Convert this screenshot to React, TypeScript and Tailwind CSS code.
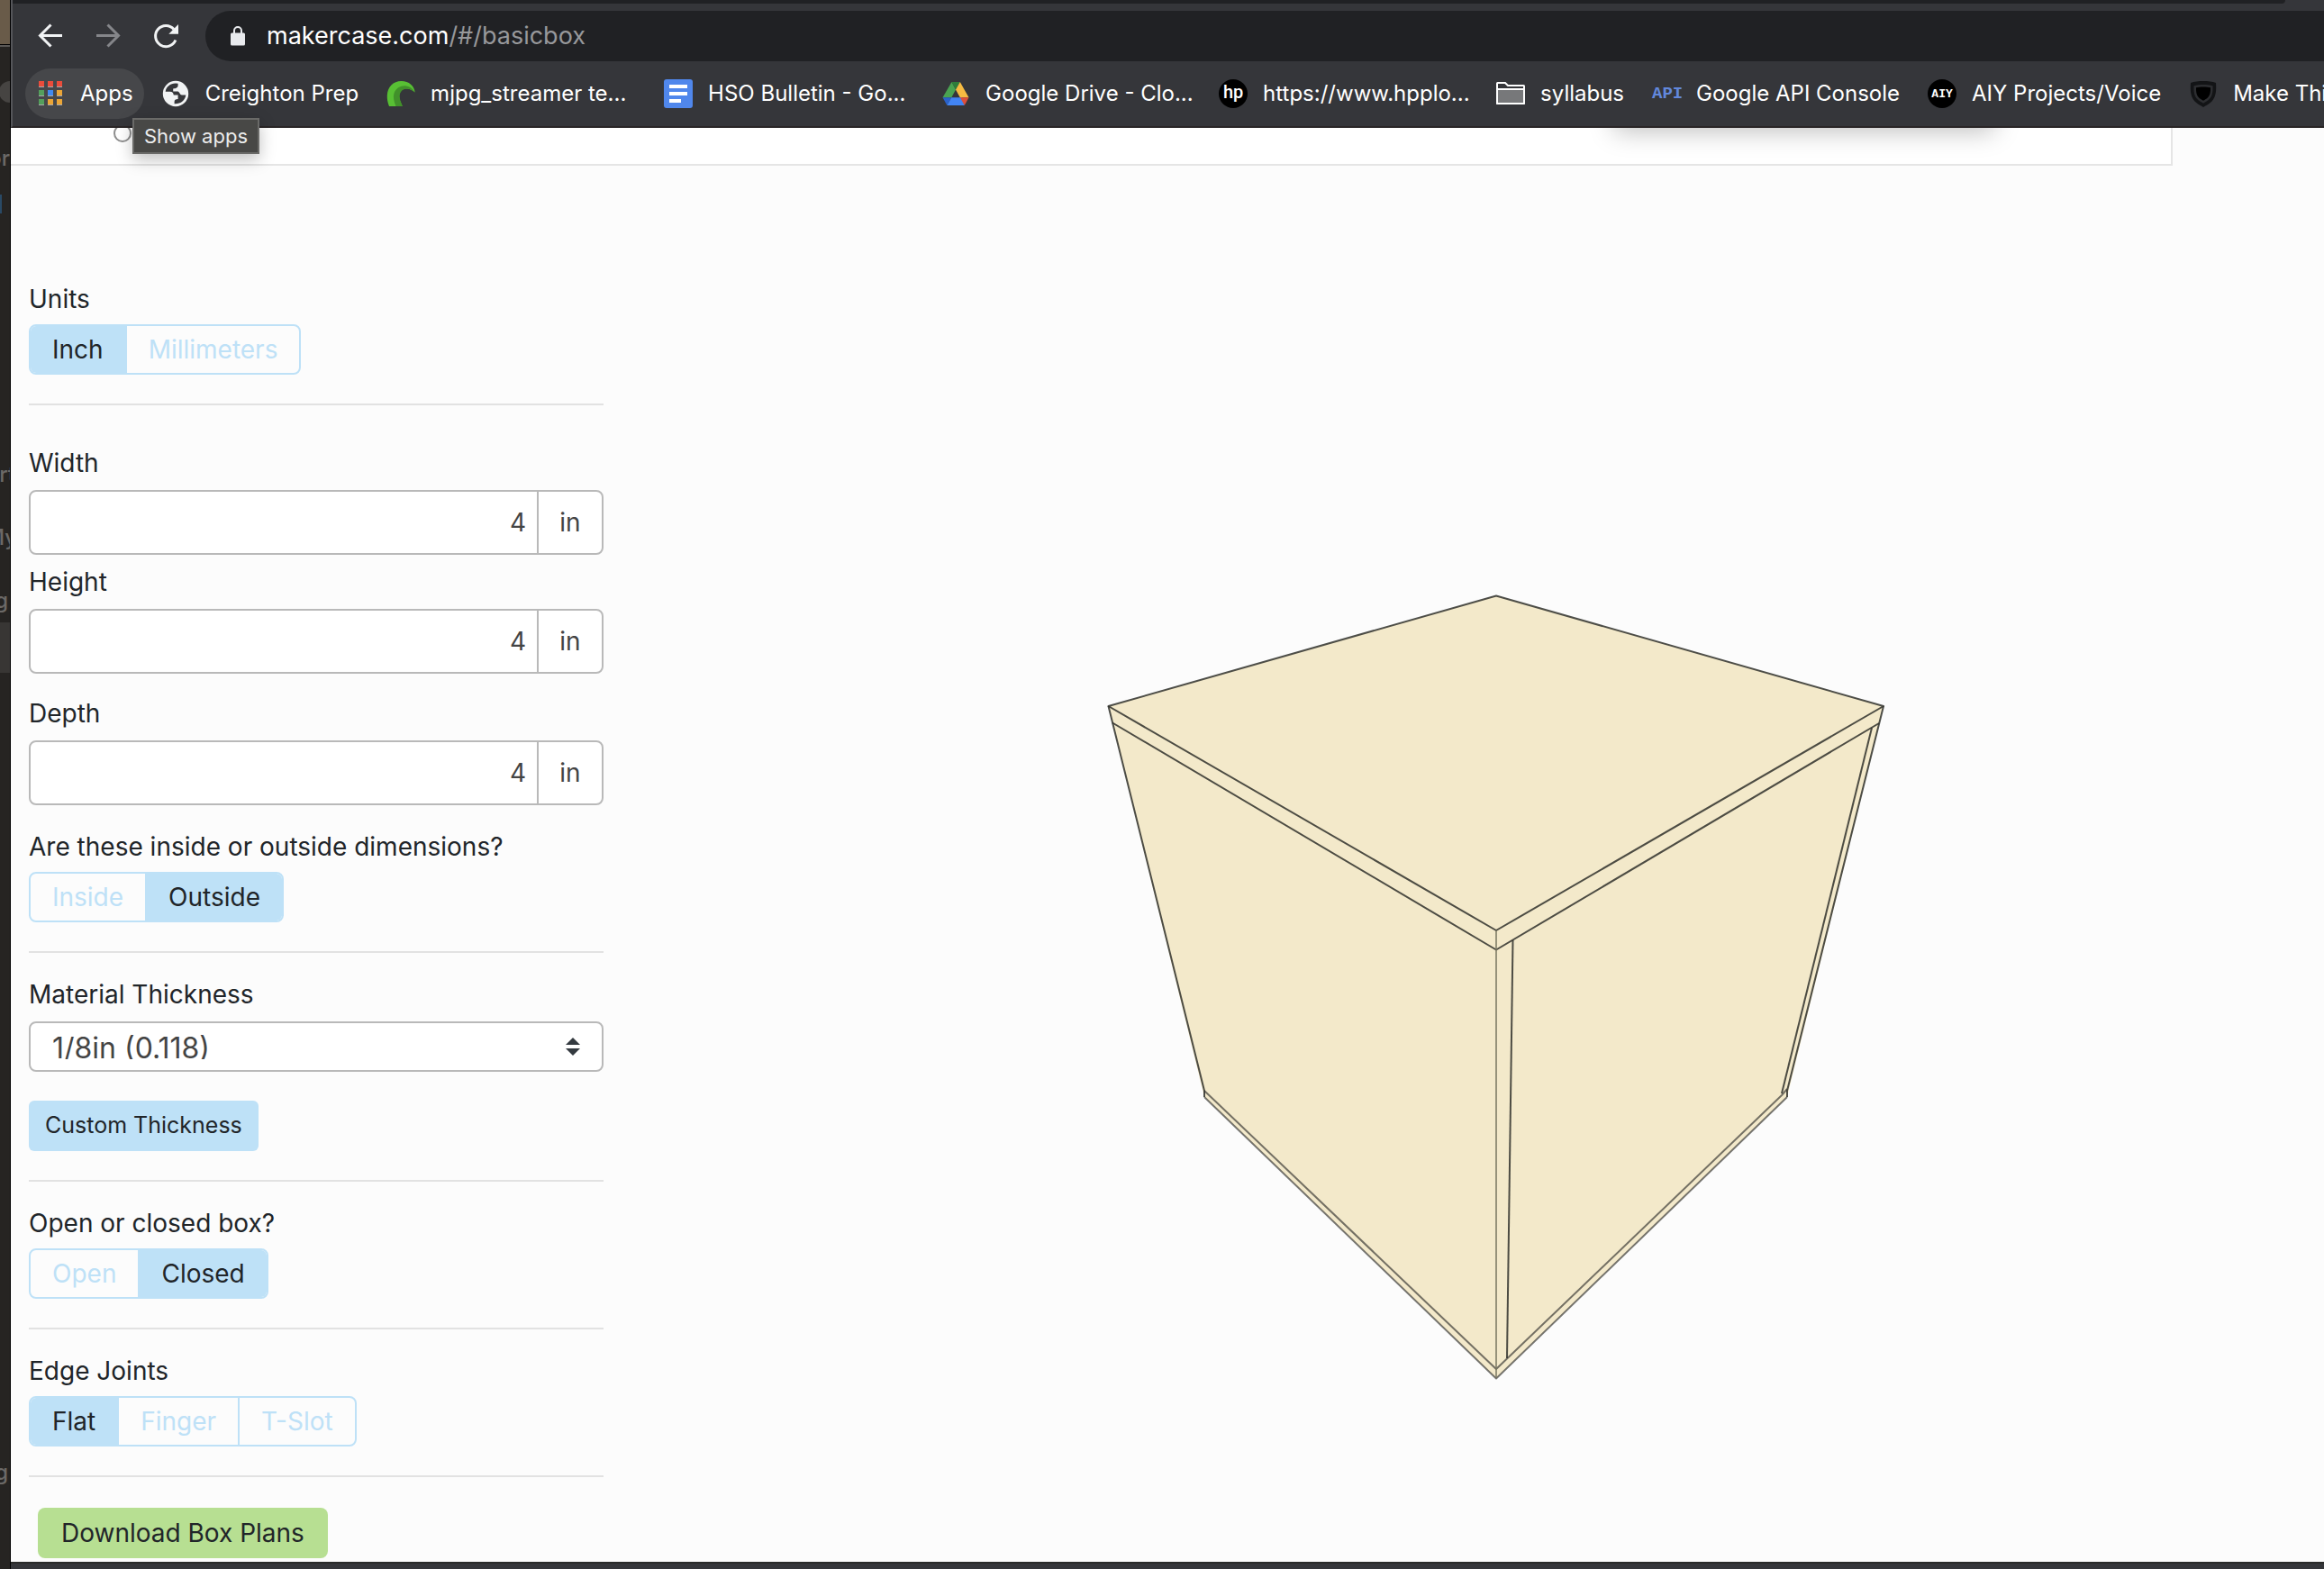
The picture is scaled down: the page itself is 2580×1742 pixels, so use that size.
import React, { useState } from 'react';

const BOOKMARK_CLASS = 'flex items-center gap-[17px] h-14 px-3 rounded-full whitespace-nowrap shrink-0';

const AppsIcon = () => (
  <svg viewBox="0 0 32 32" className="w-8 h-8 shrink-0" aria-hidden="true">
    {[
      ['#ea4c3b', '#ea4c3b', '#ea4c3b'],
      ['#549f5c', '#4189f0', '#eba536'],
      ['#549f5c', '#eba536', '#eba536'],
    ].map((row, y) =>
      row.map((fill, x) => (
        <g key={`${x}-${y}`}>
          <rect x={3 + x * 10} y={2 + y * 10} width="6" height="6" fill={fill} />
          <rect x={3 + x * 10} y={8 + y * 10} width="6" height="1" fill="#a9a9ab" />
        </g>
      ))
    )}
  </svg>
);

const GlobeIcon = () => (
  <svg viewBox="0 0 32 32" className="w-8 h-8 shrink-0" aria-hidden="true">
    <circle cx="16" cy="16" r="14.2" fill="#f1f3f4" />
    <path
      d="M16 4.6C10 4.6 5.4 8.6 4.7 13.8H9.6C12.6 13.8 13.4 15.4 13.8 17.6H18.6V22C16 22 14.4 23 14.6 25.4V27.2C21.4 27.6 26.8 23 27.3 17.4H23C20.6 17.4 20.2 13.4 18.4 13.4H13.2V10.4C16 10.4 18.6 9.4 18.6 6.8V4.8Z"
      fill="#35363a"
    />
  </svg>
);

const TentacleIcon = () => (
  <svg viewBox="0 0 32 32" className="w-8 h-8 shrink-0" aria-hidden="true">
    <path d="M3 30C1.400 26 .6 22 .8 18C1.200 8.500 7.500 2 16.500 2C25 2 31.200 7.500 31.600 14.600C28 11.200 24.500 10 21 10.500C15.500 11.500 13.500 16 14.500 21C15 25 17 27.500 17.600 30Z" fill="#58c034" />
    <path d="M10.500 30C8 24 7.200 19 8.500 15.500C10.500 9.500 16 6.800 21 7.200C25.500 7.600 29 10 31.600 14.600C28 11.400 24.500 10.200 21 10.700C16 11.800 14 16 14.800 21C15.400 25 17.200 27.500 17.800 30Z" fill="#41912a" />
  </svg>
);

const DocsIcon = () => (
  <svg viewBox="0 0 32 32" className="w-8 h-8 shrink-0" aria-hidden="true">
    <rect width="32" height="32" rx="3" fill="#5087ec" />
    <path d="M6 6h20v4H6zM6 14h20v4H6zM6 22h13v4H6z" fill="#fff" />
  </svg>
);

const DriveIcon = () => (
  <svg viewBox="0 0 32 32" className="w-8 h-8 shrink-0" aria-hidden="true">
    <path d="M11.500 3L1.500 20.200H11.300L16 11.500Z" fill="#4aa351" />
    <path d="M11.500 3H20.800L16 11.500Z" fill="#2d7d3a" />
    <path d="M20.800 3L30.500 20.200H20.800L16 11.500Z" fill="#f6bb42" />
    <path d="M1.500 20.200H11.300L6.400 29Z" fill="#2a62cb" />
    <path d="M9 20.200H23L25.800 29H6.400L11.300 20.200Z" fill="#4285f4" />
    <path d="M20.800 20.200H30.500L25.800 29Z" fill="#dc4f3b" />
  </svg>
);

const HpIcon = () => (
  <span className="flex items-center justify-center w-8 h-8 shrink-0 rounded-full bg-black text-white text-[20px] leading-none font-[Roboto] font-medium pb-1" aria-hidden="true">
    hp
  </span>
);

const FolderIcon = () => (
  <svg viewBox="0 0 32 32" className="w-8 h-8 shrink-0" aria-hidden="true">
    <path d="M1 4.500Q1 4 1.500 4H10L13 7H30.500Q31 7 31 7.500V26.500Q31 27 30.500 27H1.500Q1 27 1 26.500Z" fill="#35363a" stroke="#fff" strokeWidth="2" />
    <path d="M1 11H31V27H1Z" fill="#77787a" stroke="#fff" strokeWidth="2" strokeLinejoin="round" />
  </svg>
);

const ApiIcon = () => (
  <span className="w-8 shrink-0 font-['Liberation_Mono'] font-bold text-[19px] leading-8 text-[#6288dc]" aria-hidden="true">
    API
  </span>
);

const AiyIcon = () => (
  <span className="flex items-center justify-center w-8 h-8 shrink-0 rounded-full bg-black text-white text-[13px] leading-none font-bold font-['Liberation_Mono']" aria-hidden="true">
    AIY
  </span>
);

const ShieldIcon = () => (
  <svg viewBox="0 0 32 32" className="w-8 h-8 shrink-0" aria-hidden="true">
    <path d="M16 2C21 2 26 2.500 30 4C30.800 14 29.500 20 25.500 24.500C22.500 27.500 19 29 16 31C13 29 9.500 27.500 6.500 24.500C2.500 20 1.200 14 2 4C6 2.500 11 2 16 2Z" fill="#131416" />
    <path d="M16 6C20 6 23.500 6.500 26.500 7.300C26.800 14.500 25.800 18.600 23 21.800C21 24 18.500 25 16 26.700C13.500 25 11 24 9 21.800C6.200 18.600 5.200 14.500 5.500 7.300C8.500 6.500 12 6 16 6Z" fill="#2c2d30" />
    <path d="M16 8.500C19 8.500 21.800 8.800 24 9.300C24.200 14.500 23.500 17.500 21.300 20C19.700 21.700 17.800 22.600 16 23.800C14.200 22.600 12.300 21.700 10.700 20C8.500 17.500 7.800 14.500 8 9.300C10.200 8.800 13 8.500 16 8.500Z" fill="#000" />
  </svg>
);

const BOOKMARKS = [
  { label: 'Creighton Prep', icon: GlobeIcon },
  { label: 'mjpg_streamer te...', icon: TentacleIcon, long: true },
  { label: 'HSO Bulletin - Go...', icon: DocsIcon, long: true },
  { label: 'Google Drive - Clo...', icon: DriveIcon, long: true },
  { label: 'https://www.hpplo...', icon: HpIcon, long: true },
  { label: 'syllabus', icon: FolderIcon },
  { label: 'Google API Console', icon: ApiIcon },
  { label: 'AIY Projects/Voice', icon: AiyIcon },
  { label: 'Make Things', icon: ShieldIcon },
];

const BrowserBar = () => (
  <header className="relative z-10 bg-[#35363a] border-b-2 border-b-[#292526] border-l-2 border-l-[#55565a]">
    {/* Bottom of the tab strip */}
    <div className="h-1 mr-[43px] bg-[#202124] rounded-br-md"></div>

    <div className="flex items-center pt-2 pl-[26px]">
      <div className="flex items-center gap-8">
        <button aria-label="Back">
          <svg viewBox="0 0 32 32" className="w-8 h-8" fill="none" stroke="#f1f3f4" strokeWidth="3">
            <path d="M29 15.500H5M16.500 3.500L4.500 15.500L16.500 27.500" />
          </svg>
        </button>
        <button aria-label="Forward">
          <svg viewBox="0 0 32 32" className="w-8 h-8" fill="none" stroke="#85868a" strokeWidth="3">
            <path d="M3 15.500H27M15.500 3.500L27.500 15.500L15.500 27.500" />
          </svg>
        </button>
        <button aria-label="Reload">
          <svg viewBox="0 0 32 32" className="w-8 h-8">
            <path d="M25 8.500A11.600 11.600 0 1 0 26.900 20.500" fill="none" stroke="#f1f3f4" strokeWidth="3" />
            <path d="M30 3V13.700H19.300Z" fill="#f1f3f4" />
          </svg>
        </button>
      </div>
      <div className="flex-1 flex items-center gap-6 h-14 ml-7 pl-7 rounded-l-full bg-[#202124] text-[27px]">
        <svg viewBox="0 0 16 22" className="w-4 h-[22px]" aria-hidden="true">
          <rect y="7.500" width="16" height="14" rx="1.500" fill="#e8eaed" />
          <path d="M4 8V5a4 4 0 0 1 8 0V8" fill="none" stroke="#e8eaed" strokeWidth="2" />
        </svg>
        <p className="text-white">
          makercase.com<span className="text-[#97989b]">/#/basicbox</span>
        </p>
      </div>
    </div>

    <nav className="flex items-center gap-[7px] py-2 pl-[14px] text-[24px] text-white">
      <div className="relative shrink-0">
        <a href="#apps" className={`${BOOKMARK_CLASS} bg-[#46474a]`}>
          <AppsIcon />
          Apps
        </a>
        <div role="tooltip" className="absolute left-[119px] top-[55px] h-10 px-[11px] flex items-center bg-[#484846] border-2 border-[#6a6a68] text-[#ececec] text-[22px] whitespace-nowrap shadow-[0_6px_18px_rgba(0,0,0,0.25)]">
          Show apps
        </div>
      </div>
      {BOOKMARKS.map(({ label, icon: Icon, long }) => (
        <a key={label} href="#bookmark" className={`${BOOKMARK_CLASS} ${long ? 'w-[301px]' : ''}`}>
          <Icon />
          {label}
        </a>
      ))}
    </nav>
  </header>
);

// Sliver of the window that sits behind the browser
const BackgroundWindow = () => (
  <aside className="w-3 shrink-0 flex flex-col items-end overflow-hidden bg-[#262422] border-r border-black text-[#6b6967] text-[24px] leading-8 font-medium" aria-hidden="true">
    <div className="w-full h-[49px] shrink-0 bg-[#695b49]"></div>
    <div className="w-full h-[3px] shrink-0 bg-[#5b5957] border-t border-black"></div>
    <div className="w-6 h-6 shrink-0 mt-[38px] mr-[-12px] rounded-full bg-[#464442]"></div>
    <span className="mt-[46px]">or</span>
    <div className="self-start w-[2px] h-[21px] mt-6 bg-[#2a4a66]"></div>
    <span className="mt-[274px] mr-[-6px]">rt</span>
    <span className="mt-[38px] mr-[-8px]">My</span>
    <span className="mt-[38px] mr-[2px]">g</span>
    <div className="w-full h-14 mt-2 shrink-0 bg-[#383634]"></div>
    <span className="mt-[872px] mr-[2px]">g</span>
  </aside>
);

interface ToggleProps {
  name: string;
  label: string;
  options: string[];
  initial: string;
}

const ToggleGroup: React.FC<ToggleProps> = ({ name, label, options, initial }) => {
  const [value, setValue] = useState(initial);

  return (
    <div role="group" aria-labelledby={name}>
      <p id={name} className="mb-2 leading-10">{label}</p>
      <div className="inline-flex h-14 align-top rounded-lg border-2 border-[#bee1f7] divide-x-2 divide-[#bee1f7] overflow-hidden">
        {options.map((o) => (
          <button
            key={o}
            type="button"
            onClick={() => setValue(o)}
            aria-pressed={value === o}
            className={`px-6 ${value === o ? 'bg-[#bee1f7] text-[#212529]' : 'text-[#bee1f7]'}`}
          >
            {o}
          </button>
        ))}
      </div>
    </div>
  );
};

const DimensionInput = ({ label }: { label: string }) => {
  const [value, setValue] = useState('4');
  const id = label.toLowerCase();

  return (
    <div>
      <label htmlFor={id} className="block mb-[10px] leading-10">{label}</label>
      <div className="flex h-[72px] rounded-lg border-2 border-[#b9b9b9] bg-white text-[#444444] overflow-hidden">
        <input
          id={id}
          value={value}
          onChange={(e) => setValue(e.target.value)}
          className="flex-1 min-w-0 px-3 text-right outline-none"
        />
        <span className="flex items-center justify-center w-[72px] border-l-2 border-[#b9b9b9]">in</span>
      </div>
    </div>
  );
};

const Divider = () => <hr className="my-0 border-t-2 border-[#e2e2e2]" />;

const Sidebar = () => (
  <form className="w-[638px] shrink-0 text-[28px] text-[#212529]" onSubmit={(e) => e.preventDefault()}>
    <div className="pb-8">
      <ToggleGroup name="units" label="Units" options={['Inch', 'Millimeters']} initial="Inch" />
    </div>
    <Divider />

    <div className="pt-11 pb-8">
      <DimensionInput label="Width" />
      <div className="mt-[10px]">
        <DimensionInput label="Height" />
      </div>
      <div className="mt-6">
        <DimensionInput label="Depth" />
      </div>
      <div className="mt-[26px]">
        <ToggleGroup name="dimensions" label="Are these inside or outside dimensions?" options={['Inside', 'Outside']} initial="Outside" />
      </div>
    </div>
    <Divider />

    <div className="pt-[26px] pb-8">
      <label htmlFor="thickness" className="block mb-[10px] leading-10">Material Thickness</label>
      <div className="relative">
        <select
          id="thickness"
          className="block w-full h-14 px-6 pt-1 pb-3 appearance-none rounded-lg border-2 border-[#b9b9b9] bg-white text-[32px] text-[#444444] outline-none"
        >
          <option>1/8in (0.118)</option>
        </select>
        <svg viewBox="0 0 16 20" className="absolute right-[26px] top-[18px] w-4 h-5 pointer-events-none" fill="#343a40" aria-hidden="true">
          <path d="M8 0L16 8H0ZM8 20L0 12H16Z" />
        </svg>
      </div>
      <button type="button" className="block h-14 mt-8 px-[18px] rounded-md bg-[#bee1f7] text-[25px]">Custom Thickness</button>
    </div>
    <Divider />

    <div className="pt-[26px] pb-8">
      <ToggleGroup name="lid" label="Open or closed box?" options={['Open', 'Closed']} initial="Closed" />
    </div>
    <Divider />

    <div className="pt-[26px] pb-8">
      <ToggleGroup name="joints" label="Edge Joints" options={['Flat', 'Finger', 'T-Slot']} initial="Flat" />
    </div>
    <Divider />

    <button type="submit" className="block h-14 mt-[34px] ml-[10px] mb-1 px-[26px] rounded-lg bg-[#b7df92]">Download Box Plans</button>
  </form>
);

const BoxPreview = () => (
  <svg viewBox="1228 658 866 874" className="w-[866px] h-[874px]" role="img" aria-label="Box preview">
    <path d="M1661 660.500L2091 783L1984 1217L1661 1529.500L1337 1217L1230.500 783Z" fill="#f3e9ca" />
    <g fill="none" stroke="#2f302c" strokeWidth="2" strokeOpacity="0.85" strokeLinejoin="round">
      {/* lid */}
      <path d="M1230.500 783L1661 660.500L2091 783L1661 1032Z" />
      <path d="M1235 801.500L1661 1053.500L2086 802" />
      {/* sides */}
      <path d="M1230.500 783L1337 1210V1217" />
      <path d="M2091 783L1984 1210V1217" />
      <path d="M2078 807L1978 1213" />
      <path d="M1679.500 1043L1673 1507" />
      {/* base */}
      <path d="M1337 1210L1661 1519L1978 1215L1984 1208" strokeOpacity="0.65" />
      <path d="M1337 1217L1661 1529.500L1984 1217" strokeOpacity="0.65" />
    </g>
    <path d="M1661 1032V1529" stroke="#77745f" strokeWidth="1.500" />
  </svg>
);

export default function App() {
  return (
    <div className="flex min-h-screen bg-[#fcfcfc] font-[Inter,sans-serif]">
      <BackgroundWindow />
      <div className="flex-1 min-w-0 flex flex-col overflow-hidden">
        <BrowserBar />

        <main className="flex-1">
          {/* Tail end of the card scrolled under the toolbar */}
          <div className="relative h-[42px] mr-[168px] pl-[114px] overflow-hidden bg-white border-b-2 border-r-2 border-[#e5e5e5]">
            <input type="radio" aria-label="Box type" className="block appearance-none w-5 h-5 -mt-1 rounded-full border-2 border-[#8e8e8e]" />
            <div className="absolute right-[196px] -top-10 w-[422px] h-10 shadow-[0_4px_28px_rgba(0,0,0,0.25)]"></div>
          </div>

          <div className="flex pt-[128px] pl-5">
            <Sidebar />
            <section className="flex-1 flex justify-center items-start pt-[347px] pl-[72px]">
              <BoxPreview />
            </section>
          </div>
        </main>

        <footer className="h-2 bg-[#35363a] border-t-2 border-[#2a2b2a]"></footer>
      </div>
    </div>
  );
}
